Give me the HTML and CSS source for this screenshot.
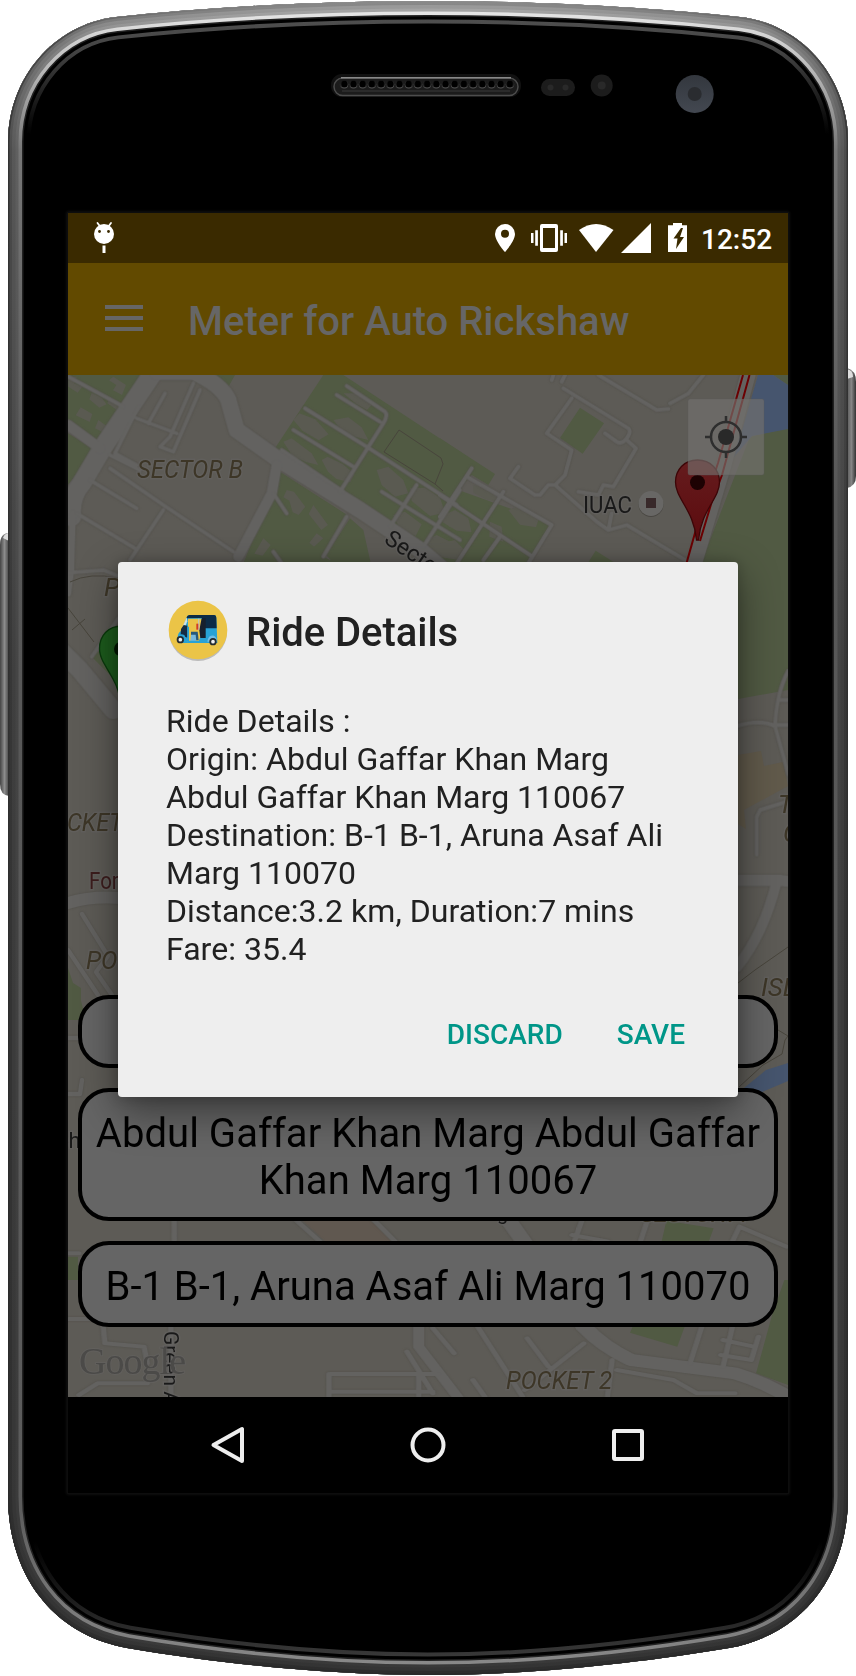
FILE: index.html
```html
<!DOCTYPE html>
<html lang="en">
<head>
<meta charset="utf-8">
<title>Meter for Auto Rickshaw</title>
<link rel="stylesheet" href="styles.css">
</head>
<body>
<main class="device">
  <svg class="shell" viewBox="0 0 856 1676" aria-hidden="true">
    <defs>
      <path id="body" d="M8 142C8 78 54 24 116 17C220 6 330 1 428 1S636 6 740 17C802 24 848 78 848 142V1496C848 1572 806 1634 729 1648C640 1663 530 1675 428 1675S216 1663 127 1648C50 1634 8 1572 8 1496Z"/>
      <clipPath id="clip"><use href="#body"/></clipPath>
      <linearGradient id="edge" gradientUnits="userSpaceOnUse" x1="0" y1="0" x2="0" y2="1676"><stop offset="0" stop-color="#8e8e8e"/><stop offset=".02" stop-color="#4a4a4a"/><stop offset=".09" stop-color="#333"/><stop offset="1" stop-color="#292929"/></linearGradient>
      <linearGradient id="rim" gradientUnits="userSpaceOnUse" x1="0" y1="0" x2="0" y2="1676"><stop offset="0" stop-color="#adadad"/><stop offset=".025" stop-color="#858585"/><stop offset=".09" stop-color="#606060"/><stop offset=".4" stop-color="#454545"/><stop offset="1" stop-color="#393939"/></linearGradient>
      <linearGradient id="shine" gradientUnits="userSpaceOnUse" x1="0" y1="0" x2="0" y2="1676"><stop offset="0" stop-color="#eee"/><stop offset=".03" stop-color="#c8c8c8"/><stop offset=".09" stop-color="#777"/><stop offset=".3" stop-color="#575757"/><stop offset=".9" stop-color="#5c5c5c"/><stop offset="1" stop-color="#8c8c8c"/></linearGradient>
      <linearGradient id="glass" gradientUnits="userSpaceOnUse" x1="0" y1="0" x2="0" y2="1676"><stop offset="0" stop-color="#555"/><stop offset=".03" stop-color="#444"/><stop offset=".08" stop-color="#000"/><stop offset=".92" stop-color="#000"/><stop offset="1" stop-color="#424242"/></linearGradient>
      <linearGradient id="keyL"><stop offset="0" stop-color="#444"/><stop offset=".5" stop-color="#8c8c8c"/><stop offset="1" stop-color="#444"/></linearGradient>
      <linearGradient id="keyR"><stop offset="0" stop-color="#5a5a5a"/><stop offset=".5" stop-color="#858585"/><stop offset="1" stop-color="#333"/></linearGradient>
      <linearGradient id="cam" x2="0" y2="1"><stop offset="0" stop-color="#33373e"/><stop offset="1" stop-color="#434851"/></linearGradient>
      <pattern id="holes" patternUnits="userSpaceOnUse" x="339.7" y="79" width="9.2" height="10"><circle cx="4.6" cy="5.6" r="3.9" fill="#555"/><circle cx="4.6" cy="5" r="3.5" fill="#000"/></pattern>
    </defs>
    <path d="M9 533Q0 533 0 545V784Q0 795 9 796Z" fill="url(#keyL)"/>
    <path d="M3 538Q5 533 9 533V541Z" fill="#ddd"/>
    <path d="M847 368Q856 370 856 382V476Q856 486 847 488Z" fill="url(#keyR)"/>
    <path d="M847 369Q853 370 853 377L847 379Z" fill="#ddd"/>
    <g clip-path="url(#clip)">
      <use href="#body" fill="#000"/>
      <g fill="none">
        <use href="#body" stroke="url(#glass)" stroke-width="45"/>
        <use href="#body" stroke="#000" stroke-width="37"/>
        <use href="#body" stroke="#222" stroke-width="31"/>
        <use href="#body" stroke="url(#shine)" stroke-width="28"/>
        <use href="#body" stroke="url(#rim)" stroke-width="21"/>
        <use href="#body" stroke="#000" stroke-opacity=".08" stroke-width="15"/>
        <use href="#body" stroke="#000" stroke-opacity=".12" stroke-width="8"/>
        <use href="#body" stroke="url(#edge)" stroke-width="3"/>
      </g>
    </g>
    <rect x="331" y="74" width="190" height="23" rx="11" fill="#111"/>
    <rect x="334" y="78" width="184" height="17.500" rx="8.700" fill="#1b1b1b" stroke="#4c4c4c" stroke-width="1.500"/>
    <path d="M341 77.700H511" stroke="#888" stroke-width="1.500"/>
    <rect x="339.700" y="79" width="174.800" height="10" fill="url(#holes)"/>
    <path d="M342 91H510" stroke="#3a3a3a" stroke-width="1"/>
    <rect x="541" y="79" width="34" height="17" rx="8.500" fill="#1c1c1c"/>
    <circle cx="550.500" cy="87.500" r="3" fill="#292929"/><circle cx="565.500" cy="87.500" r="3" fill="#292929"/>
    <circle cx="601.700" cy="85.500" r="11" fill="#1c1c1c"/><circle cx="601.700" cy="85.500" r="4" fill="#292929"/>
    <circle cx="694.700" cy="94" r="19" fill="url(#cam)"/><circle cx="694.700" cy="94" r="7" fill="#2a2c30"/>
  </svg>

  <section class="screen">
    <header class="status">
      <svg class="status-droid" viewBox="93 222 22 34"><g fill="#fff"><circle cx="104" cy="235" r="10"/><path d="M102.500 246.500h3v7.500h-3z"/></g><path d="M97.500 224l3 4M111 224l-3 4" stroke="#fff" stroke-width="1.800" stroke-linecap="round"/><circle cx="99.500" cy="232.500" r="1.400" fill="#3a2a00"/><circle cx="108.500" cy="232.500" r="1.400" fill="#3a2a00"/></svg>
      <svg class="status-icons" viewBox="494 222 196 32" fill="#fff">
        <path fill-rule="evenodd" d="M505 224a10 10 0 0 1 10 10c0 7-10 18-10 18s-10-11-10-18a10 10 0 0 1 10-10zm0 5.700a4 4 0 1 0 0 8 4 4 0 0 0 0-8z"/>
        <path fill-rule="evenodd" d="M542 224h14q2 0 2 2v24q0 2-2 2h-14q-2 0-2-2v-24q0-2 2-2zm1 4v20h12v-20z"/>
        <path d="M535.200 230.300h2.700v15.500h-2.700zM531 233h2.500v10H531zM560.200 230.300h2.700v15.500h-2.700zM564.500 233h2.500v10h-2.500z"/>
        <path d="M579 230Q596 218 613.500 230L596 252Z"/><path d="M621 253L651 223V253Z"/>
        <path d="M673 225.300V223h9v2.300h5V252h-19v-26.700z"/><path d="M681 228l-7.500 10.500h4L676 249l8-12h-4l3-9z" fill="#3a2a00"/>
      </svg>
      <span class="time">12:52</span>
    </header>
    <div class="toolbar">
      <span class="menu"><i></i><i></i><i></i></span>
      <h1 class="app-title">Meter for Auto Rickshaw</h1>
    </div>
    <div class="map">
      <svg class="map-art" viewBox="68 375 720 1022">
        <rect x="68" y="375" width="720" height="1022" fill="#5d5b56"/>
        <g fill="#515a43">
          <g transform="translate(60 370) scale(.33333)">
            <path d="M24 15H250L120 215L24 155ZM24 190L105 240L24 345ZM440 15H525L500 60ZM790 15H850L1205 248V575H1150L840 370L645 235ZM660 305L865 437L790 560L830 580H550ZM870 445L910 480L932 578H820L798 555ZM95 860L120 840L165 930Z"/>
          </g>
          <g transform="translate(440 370) scale(.33333)">
            <path d="M0 205L165 312L145 345L95 315L55 360L335 460L265 578H0ZM420 113L492 160L428 251L360 204ZM467 542L522 577H445ZM930 200L1044 175V960L890 988L785 575ZM1000 15H1044V45Z"/>
          </g>
          <path d="M68 968L73 983L81 988V1001L86 1020H68Z"/>
          <g transform="translate(60 1080) scale(.4719 .33333)"><path d="M17 530H38V600H17ZM1285 422L1385 445L1375 484H1275ZM1215 735H1325L1308 800L1208 758ZM1535 600L1543 600V915L1475 880L1510 700Z"/></g>
        </g>
        <g fill="#46556e"><path d="M758 375H773L788 385V429L752 436L728 464L742 430ZM739 1092L766 1070L788 1063V1081L762 1092Z"/></g>
        <path d="M738 755L761 751L764 766L783 762L788 786L744 810L746 829L738 824ZM784 1389l4 2v6h-8z" fill="#615a4b"/>
        <path d="M302 1220H370L397 1241H325Z" fill="#605850"/>
        <g fill="#5a5a51" transform="translate(60 370) scale(.33333)">
          <path d="M25 20l25 0-8 20 25 10-14 18-28-18zM95 68l30 15 15 20-22 10-30-25zM160 20l38 25-12 30-27-14 10-16-22-14zM62 112l35 20-8 24-42-20zM115 150l28 20-8 20-30-15zM150 80l30 22-10 18-28-20zM700 150l18-20 48 18 40 45-30 18-48-28zM785 270l18-10 45 22 35 30-12 25-42-10-25-22zM670 215l25-10 60 45 20 35-35-8-42-18zM820 150l45-8 40 30 20 38-40-10-40-18zM950 300l35-10 45 40 15 40-40 10-40-35zM1050 355l45-2 45 30 15 45-45 10-55-45zM1000 435l35-10 50 38-18 35-48-22zM1095 510l35-15 60 30 5 45-50-8-52-22zM680 360l22 5 34 45-20 25-18-8-10-35-18-10zM760 405l44 60-20 15-38-48zM770 490l20 15-28 25-14-12zM610 505l22 20-24 32-25-6zM850 70l40 0 45 35-14 15-32-18zM1145 420l55 20v40l-32-10z"/>
        </g>
        <g fill="#5a5a51" transform="translate(440 370) scale(.33333)">
          <path d="M10 435l35-15 40 25 10 42-45-5-42-25zM205 420l40-15 55 32-12 35-48-8zM150 455l35 15 5 45-42-15zM100 345l50 15 30 38-42-10-38-20zM0 520l45-10 30 32-18 25-57-10z"/>
        </g>
        <g class="roads">
          <g transform="translate(60 370) scale(.33333)">
            <path stroke-width="58" d="M275 15L130 230L65 340Q30 380 35 440"/>
            <path stroke-width="20" d="M38 430L33 600L24 670"/>
            <path stroke-width="50" d="M290 5H400Q485 45 505 90L530 180L650 265L900 420L1080 540L1150 600"/>
            <path stroke-width="32" d="M24 165L120 235M650 285L635 370L535 560"/>
            <path stroke-width="56" d="M-10 830L60 900L160 1020"/>
            <path stroke-width="12" d="M24 20L190 110M315 70L265 160M400 40L330 200L300 230L340 245L420 60M235 110L165 250L230 285M230 145L350 190M150 255L240 300M150 295L310 405L520 545M90 330L230 415M50 430L225 535M310 420L210 570M30 608L130 600L180 620M95 860L175 745M640 370L680 430M860 440L790 560M860 48L975 125Q985 135 970 160L840 365M830 75L960 155M735 115L920 230L1190 405M700 180L880 290M665 240L850 365M1200 360L1090 530M1070 345L990 470M965 365L1200 510M640 545L665 580"/>
          </g>
          <g transform="translate(440 370) scale(.33333)">
            <path stroke-width="46" d="M925 10L850 290L760 590"/>
            <path stroke-width="12" d="M370 55L565 175Q575 185 560 205Q545 225 530 215L495 190M395 85L320 190L395 240L375 315L345 345L470 455L505 480L560 465L735 570M560 210L588 235L520 350L490 345L475 375L415 365M345 345L325 345L300 375H285L210 325L235 290M475 15L650 120L685 117M690 100L745 70L790 15M340 15L335 30M365 35L375 15M95 295L0 440M0 375L270 555M190 365L50 580M80 320L335 465L265 580M180 500L130 570M515 430L505 480"/>
          </g>
          <g transform="translate(730 560) scale(.33333 .35714)">
            <path stroke-width="12" d="M175 310Q140 370 135 465L175 600M145 392H175M135 462H175M135 465Q90 445 20 465M175 675L90 700L80 720V825"/>
            <path stroke-width="32" d="M20 897H155L175 900M140 900Q100 1050 20 1140"/>
          </g>
          <path stroke-width="12" d="M68 903Q90 896 120 898"/>
          <path stroke-width="4.500" d="M82 914L108 956L96 972L112 995M68 950L98 995M68 1038H78M68 1094H80L82 1080"/>
          <g transform="translate(60 1080) scale(.4719 .33333)">
            <path stroke-width="36" d="M950 420L990 500L1110 740Q1150 800 1210 840L1430 880Q1500 910 1560 965"/>
            <path stroke-width="24" d="M850 965L760 800V740"/>
            <path stroke-width="12" d="M242 420V480M17 520H40M17 717H90L95 790L178 800L185 850M40 945L80 910H185M235 740V950M500 420L550 484M665 420L710 484M1105 425L1090 484M1245 420L1230 484M1085 465L1160 484M1440 440L1540 500M1440 440L1425 484M570 882H800M570 935H790M570 882V950M760 882V950M885 740L980 950M990 775L1035 860M735 815L790 940M875 900L900 950M1110 790L985 930M1170 840L1160 950M1180 870L1300 900L1350 940H1430M1360 740L1335 850M1425 740L1405 860M1400 825L1465 840L1480 770M1405 780L1470 800M790 745L835 820"/>
          </g>
        </g>
        <g fill="none" stroke="#48453c" stroke-width="1">
          <path d="M70 582Q90 572 118 578M68 608L94 642M72 630L85 619M399 430L441 458L443 464L435 484L384 452ZM435 484l8 7M738 983L755 970L788 947M739 1087L763 1065L782 1054L785 1040L788 1036M778 1030L788 1036"/>
        </g>
        <g fill="none" stroke="#6b0002" stroke-width="2"><path d="M743 375L718 463L695 533L686 565M749.500 375L722 475L712 501L700 541"/></g>
        <g class="map-text">
          <g class="area"><text x="137" y="478" textLength="106" lengthAdjust="spacingAndGlyphs">SECTOR B</text><text x="104" y="596">P</text><text x="67" y="831" textLength="56" lengthAdjust="spacingAndGlyphs">CKET</text><text x="86" y="969" textLength="47" lengthAdjust="spacingAndGlyphs">POC</text><text x="778" y="813">T</text><text x="783" y="842">C</text><text x="761" y="996">ISL</text><text x="506" y="1389" textLength="106" lengthAdjust="spacingAndGlyphs">POCKET 2</text><text x="640" y="1222" textLength="106">SECTOR A</text></g>
          <text x="583" y="513" textLength="49" lengthAdjust="spacingAndGlyphs">IUAC</text>
          <text transform="translate(383 542) rotate(34)" font-size="23">Sector</text>
          <text x="57" y="1148" font-size="22">ch</text><text x="497" y="1220" font-size="20">g</text>
          <text x="89" y="889" class="place" textLength="37" lengthAdjust="spacingAndGlyphs">Fort</text>
          <text transform="translate(164 1331) rotate(90)" font-size="21">Green Ave</text>
          <text x="79" y="1374" class="google" textLength="107">Google</text>
        </g>
        <circle cx="651" cy="504.500" r="12.500" fill="#494742"/><circle cx="651" cy="503.500" r="12.500" fill="#686765"/><rect x="646" y="498" width="10" height="10" fill="#38292a"/>
        <linearGradient id="red" x2="0" y2="1"><stop offset="0" stop-color="#651c1e"/><stop offset="1" stop-color="#5c0b0e"/></linearGradient>
        <path d="M697.500 460C684 460 675.500 470 675.500 482C675.500 499 694 510 696.500 540H698.500C701 510 719.500 499 719.500 482C719.500 470 711 460 697.500 460Z" fill="url(#red)" stroke="#3c0507" stroke-width="1.300"/><circle cx="697.500" cy="482.500" r="7.500" fill="#1d0203"/>
        <path d="M122 626C108 626 99.500 636 99.500 648.500C99.500 666 119 676 121 707H123C126 676 144 666 144 648.500C144 636 136 626 122 626Z" fill="#1d5c1d" stroke="#0a390c" stroke-width="1.300"/><circle cx="121.500" cy="649" r="7.500" fill="#021502"/>
        <rect x="688" y="399" width="76" height="76" rx="2" fill="#73716f" fill-opacity=".65" stroke="#555" stroke-opacity=".35"/>
        <circle cx="726" cy="437" r="8" fill="#292929"/><circle cx="726" cy="437" r="15" fill="none" stroke="#2e2e2e" stroke-width="2.500"/><path d="M726 416v6.500M726 451.500v6.500M705 437h6.500M740.500 437h6.500" stroke="#2e2e2e" stroke-width="2.500"/>
      </svg>
      <div class="fields">
        <div class="pill empty"></div>
        <div class="pill origin">Abdul Gaffar Khan Marg Abdul Gaffar Khan Marg 110067</div>
        <div class="pill destination">B-1 B-1, Aruna Asaf Ali Marg 110070</div>
      </div>
    </div>
    <nav class="nav">
      <svg viewBox="0 0 40 40"><path d="M5.500 20L34 4V36Z"/></svg>
      <svg viewBox="0 0 40 40"><circle cx="20" cy="20" r="15.500"/></svg>
      <svg viewBox="0 0 40 40"><rect x="6" y="6" width="28" height="28" rx="1"/></svg>
    </nav>

    <section class="dialog">
      <div class="dialog-head">
        <svg class="auto" viewBox="175 135 180 186">
          <ellipse cx="265" cy="231" rx="87" ry="87" fill="#bbb"/><circle cx="265" cy="225" r="88" fill="#ebc447"/>
          <path d="M204 248Q204 232 216 227L230 189Q233 180 240 180H314Q320 180 320 188L323 264H212Z" fill="#28a2d5"/>
          <path d="M230 190Q233 180 240 180H314Q320 180 320 188L321 220H277V189Z" fill="#0c2b46"/>
          <path d="M235 191H276V236L266 262H234Z" fill="#ebc447"/><path d="M276 190H288V249H272L269 225Z" fill="#17202d"/>
          <path d="M231 187L233 199L226 217H218Z" fill="#cfe1e5"/><path d="M214 222L222 210L233 212V248L213 240Z" fill="#152c43"/>
          <path d="M265 191H269V225H265Z" fill="#c3c5b5"/><path d="M260 206H266V224H260Z" fill="#d23c25"/>
          <path d="M244 230H264L267 256H244Z" fill="#26597b"/><path d="M244 239H258L260 258H242Z" fill="#78b8dc"/><path d="M204 248Q209 233 224 240L235 264H310V257H238V215H233V250Z" fill="#28a2d5"/>
          <path d="M295 252Q299 240 313 242Q323 248 322 260H293Z" fill="#72bde5"/>
          <circle cx="212" cy="254" r="11" fill="#242b30"/><circle cx="212" cy="254" r="5.500" fill="#eee"/><circle cx="310" cy="260" r="11" fill="#242b30"/><circle cx="310" cy="260" r="5.500" fill="#eee"/>
        </svg>
        <h2 class="dialog-title">Ride Details</h2>
      </div>
      <p class="message">Ride Details :<br>Origin: Abdul Gaffar Khan Marg<br>Abdul Gaffar Khan Marg 110067<br>Destination: B-1 B-1, Aruna Asaf Ali<br>Marg 110070<br>Distance:3.2 km, Duration:7 mins<br>Fare: 35.4</p>
      <div class="actions"><span>DISCARD</span><span>SAVE</span></div>
    </section>
  </section>
</main>
</body>
</html>
```
FILE: styles.css
```css
* { box-sizing: border-box; }
body { margin: 0; background: #fff; font-family: Roboto, "Noto Sans", sans-serif; }
svg { display: block; flex: none; }
.device { position: relative; width: 856px; height: 1676px; padding: 213px 68px 183px; overflow: hidden; }
.shell { position: absolute; inset: 0; width: 856px; height: 1676px; }
.screen { position: relative; display: flex; flex-direction: column; width: 720px; height: 1280px; background: #000; box-shadow: 0 0 0 1px #0d0d0d, 0 0 3px 1px #1c1c1c; }
.status { display: flex; align-items: center; height: 50px; padding: 0 17px 0 25px; background: #3a2a00; color: #fff; }
.status-droid { width: 22px; height: 34px; }
.status-icons { width: 196px; height: 32px; margin-left: auto; }
.time { width: 70px; margin-left: 11px; font-size: 28px; font-weight: 500; line-height: 34px; padding-top: 3px; white-space: nowrap; }
.toolbar { display: flex; align-items: center; height: 112px; padding-left: 37px; background: #624a00; color: #666; }
.menu { display: flex; flex-direction: column; gap: 7px; width: 38px; margin-top: -2px; }
.menu i { height: 4px; background: #666; }
.app-title { margin: 6px 0 0 45px; font-size: 40px; font-weight: 500; line-height: 48px; white-space: nowrap; }
.map { position: relative; height: 1022px; display: flex; flex-direction: column; justify-content: flex-end; overflow: hidden; }
.map-art { position: absolute; inset: 0; width: 720px; height: 1022px; }
.roads { fill: none; stroke: #636260; stroke-linejoin: round; stroke-linecap: round; filter: drop-shadow(0 0 .8px #504e48); }
.map-text { font-size: 24px; fill: #191919; }
.map-text text { paint-order: stroke; stroke: #646361; stroke-width: 3px; stroke-opacity: .6; }
.area { font-size: 26px; font-style: italic; fill: #3d3627; }
.map-text .place { fill: #3c1d1d; }
.map-text .google { font-family: "Liberation Serif", serif; font-size: 38px; fill: #4b4a48; stroke-width: 2px; }
.fields { position: relative; display: flex; flex-direction: column; gap: 20px; padding: 0 10px 70px; }
.pill { display: flex; align-items: center; justify-content: center; border: 4px solid #000; border-radius: 31px; background: #656565; color: #000; font-size: 40px; line-height: 47px; text-align: center; }
.empty { height: 73px; }
.origin { height: 133px; padding: 4px 9px 0; letter-spacing: .04px; }
.destination { height: 86px; padding-top: 5px; }
.nav { display: flex; justify-content: space-between; align-items: center; height: 96px; padding: 0 140px; }
.nav svg { width: 40px; height: 40px; fill: none; stroke: #eee; stroke-width: 4; stroke-linejoin: round; }
.dialog { position: absolute; left: 50px; top: 349px; width: 620px; height: 535px; padding: 38px 48px 0; border-radius: 4px; background: #eee; color: #212121; box-shadow: 0 14px 42px rgba(0, 0, 0, .45), 0 0 14px rgba(0, 0, 0, .2); }
.dialog-head { display: flex; align-items: center; height: 62px; padding-left: 2px; }
.auto { width: 60px; height: 62px; }
.dialog-title { margin: 3px 0 0 18px; font-size: 40px; font-weight: 500; line-height: 48px; letter-spacing: -.05px; }
.message { margin: 40px 0 0; font-size: 32px; line-height: 38px; letter-spacing: .03px; white-space: nowrap; }
.actions { display: flex; justify-content: flex-end; gap: 54px; margin-top: 49px; padding-right: 5px; color: #009688; font-size: 28px; font-weight: 500; line-height: 36px; }
```
